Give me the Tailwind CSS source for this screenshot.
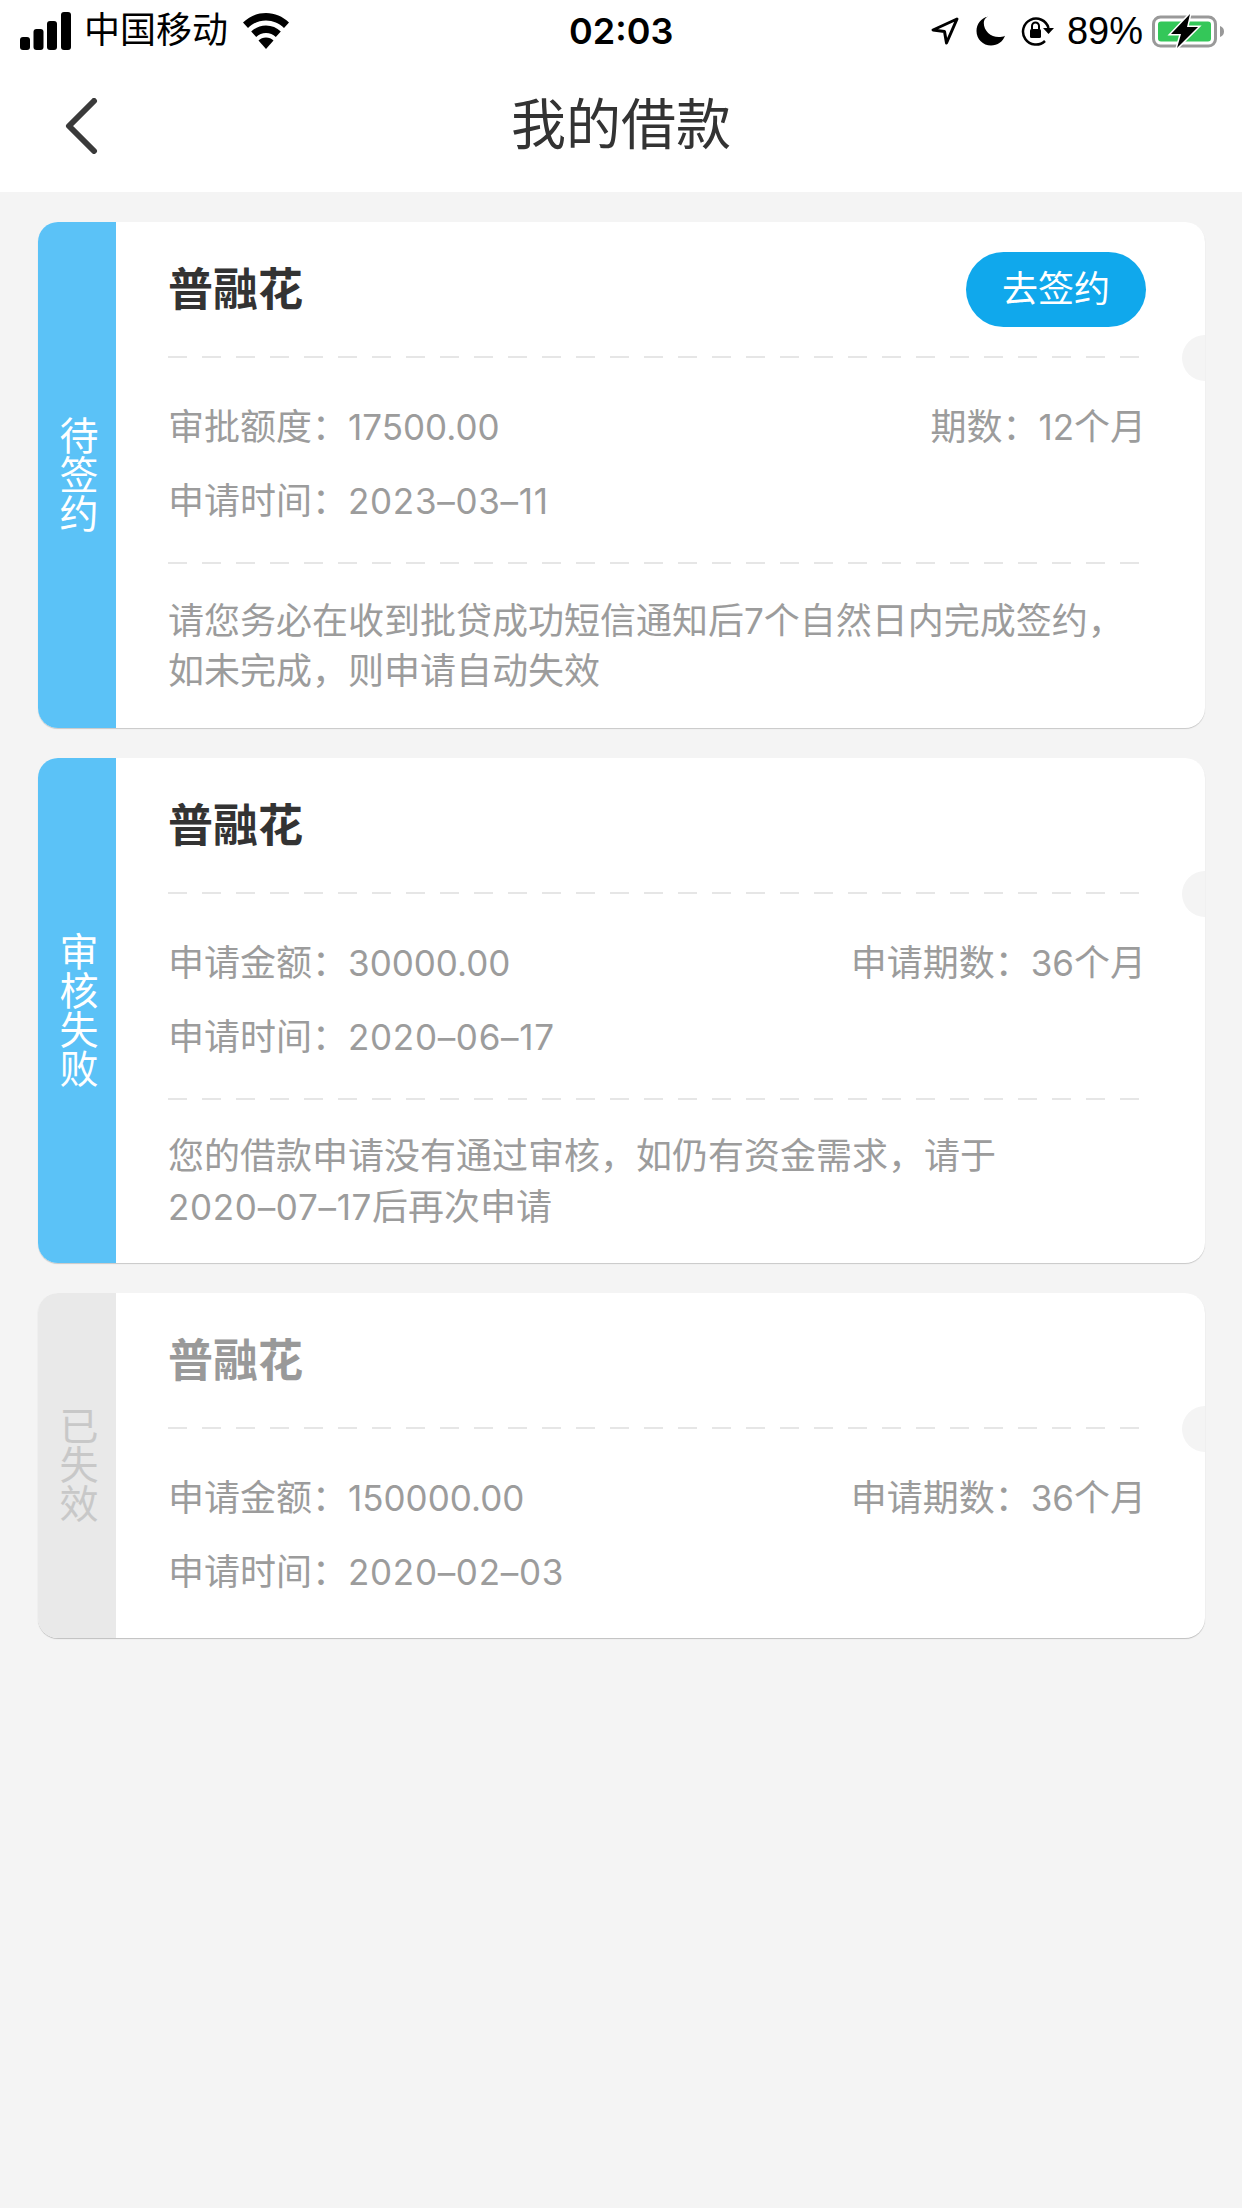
<!DOCTYPE html>
<html lang="zh-CN">
<head>
<meta charset="UTF-8">
<title>我的借款</title>
<script src="https://cdn.jsdelivr.net/npm/@tailwindcss/browser@4"></script>
</head>
<body class="bg-[#f4f4f4] font-['Liberation_Sans','Noto_Sans_CJK_SC',sans-serif]">
<div class="w-[1242px] h-[2208px] overflow-hidden flex flex-col">

  <!-- Status bar -->
  <div class="bg-white h-[62px] flex items-center justify-between relative text-[36px] text-black pl-[20px] pr-[16px]">
    <div class="flex items-center">
      <svg width="51" height="38" viewBox="0 0 51 38" fill="#000"><rect x="0" y="25" width="10" height="13" rx="3"/><rect x="13.500" y="17" width="10" height="21" rx="3"/><rect x="27" y="9" width="10" height="29" rx="3"/><rect x="41" y="0" width="10" height="38" rx="3"/></svg>
      <span class="ml-[13px]">中国移动</span>
      <svg class="ml-[15px]" width="46" height="36" viewBox="0 0 46 36" fill="#000"><path d="M23 0C14 0 6.500 3.500 0 9.500l5 5.500C10 10.300 16 7.500 23 7.500s13 2.800 18 7.500l5-5.500C39.500 3.500 32 0 23 0z"/><path d="M23 12.500c-5.800 0-10.800 2.300-14.800 6l5 5.400c2.700-2.500 6-4 9.800-4s7.100 1.500 9.800 4l5-5.400c-4-3.700-9-6-14.800-6z"/><path d="M23 24.500c-3 0-5.500 1.100-7.500 3L23 36l7.500-8.500c-2-1.900-4.500-3-7.500-3z"/></svg>
    </div>
    <span class="absolute left-[569px] top-[10px] font-['Inter'] font-semibold text-[36px] leading-[42px]">02:03</span>
    <div class="flex items-center">
      <svg width="28" height="28" viewBox="0 0 28 28" fill="none" stroke="#000" stroke-width="3" stroke-linejoin="round"><path d="M26 2 2 13l11.500 1.500L15.500 26z"/></svg>
      <svg class="ml-[17px]" width="30" height="30" viewBox="0 0 30 30" fill="#000"><path d="M12 0.500C5 2 0.500 8 0.500 15c0 8.200 6.500 14.500 14.500 14.500 6.500 0 12-4 14-9.800-2 1-4.200 1.400-6.200 1.400-8.300 0-15-6.200-15-14 0-2.500 1-4.800 3.700-6.600z"/></svg>
      <svg class="ml-[15px]" width="33" height="30" viewBox="0 0 33 30" fill="none"><path d="M27.500 12A13 13 0 1 0 24 25" stroke="#000" stroke-width="2.500"/><path d="M33 12 27.500 18 22 12z" fill="#000"/><rect x="9" y="13" width="11" height="9" rx="1.500" fill="#000"/><path d="M11 13v-3a3.500 3.500 0 0 1 7 0v3" stroke="#000" stroke-width="2"/></svg>
      <span class="ml-[13px] text-[38px]">89%</span>
      <svg class="ml-[9px]" width="74" height="36" viewBox="0 0 74 36" fill="none"><rect x="1.500" y="4" width="62" height="29" rx="7" stroke="#999" stroke-width="3"/><path d="M68 13c3 1 4 3 4 5.500s-1 4.500-4 5.500z" fill="#999"/><rect x="6" y="8.500" width="53" height="20" rx="3" fill="#34c759"/><path d="M38 1 19 21h10l-4 14 21-21H35z" fill="#000" stroke="#fff" stroke-width="3" paint-order="stroke"/></svg>
    </div>
  </div>

  <!-- Nav bar -->
  <div class="bg-white h-[130px] relative flex items-center justify-center pb-[4px] text-[#333] text-[55px]">
    <svg class="absolute left-[64px] top-[36px]" width="34" height="56" viewBox="0 0 34 56" fill="none" stroke="#3a3a3a" stroke-width="6" stroke-linecap="round" stroke-linejoin="round"><path d="M30 3 5 28l25 25"/></svg>
    <span>我的借款</span>
  </div>

  <div class="flex flex-col gap-[30px] pt-[30px] pl-[38px] pr-[37px]">

    <!-- Card 1 -->
    <div class="relative flex bg-white rounded-[20px] overflow-hidden h-[506px] shadow-[0_1px_1px_rgba(0,0,0,0.18)]">
      <div class="w-[78px] shrink-0 bg-[#5bc2f7] flex items-center justify-center pl-[4px] text-white text-[39px] leading-[39px] text-center">待<br>签<br>约</div>
      <div class="flex-1 pl-[52px] pr-[59px]">
        <div class="h-[134px] flex items-center justify-between">
          <span class="text-[45px] font-bold text-[#333] pt-[4px]">普融花</span>
          <span class="w-[180px] h-[75px] rounded-full bg-[#10a8ec] text-white text-[36px] flex items-center justify-center pt-[2px]">去签约</span>
        </div>
        <div class="h-[2px] bg-[repeating-linear-gradient(90deg,#e6e6e6_0,#e6e6e6_19px,transparent_19px,transparent_34px)]"></div>
        <div class="pt-[44px] pb-[37px] flex flex-col gap-[24px] text-[36px] text-[#9c9c9c]">
          <div class="flex justify-between h-[50px] leading-[50px]"><span>审批额度：<span class="font-['Inter'] text-[35px]">17500.00</span></span><span>期数：<span class="font-['Inter'] text-[35px]">12</span>个月</span></div>
          <div class="h-[49px] leading-[50px]">申请时间：<span class="font-['Inter'] text-[35px] tracking-[0.7px]">2023–03–11</span></div>
        </div>
        <div class="h-[2px] bg-[repeating-linear-gradient(90deg,#e6e6e6_0,#e6e6e6_19px,transparent_19px,transparent_34px)]"></div>
        <p class="pt-[32px] text-[36px] leading-[50px] text-[#9c9c9c]">请您务必在收到批贷成功短信通知后<span class="font-['Inter'] text-[35px]">7</span>个自然日内完成签约，<br>如未完成，则申请自动失效</p>
      </div>
      <div class="absolute right-[-23px] top-[113px] w-[46px] h-[46px] rounded-full bg-[#f4f4f4]"></div>
    </div>

    <!-- Card 2 -->
    <div class="relative flex bg-white rounded-[20px] overflow-hidden h-[505px] shadow-[0_1px_1px_rgba(0,0,0,0.18)]">
      <div class="w-[78px] shrink-0 bg-[#5bc2f7] flex items-center justify-center pl-[4px] text-white text-[39px] leading-[39px] text-center">审<br>核<br>失<br>败</div>
      <div class="flex-1 pl-[52px] pr-[59px]">
        <div class="h-[134px] flex items-center justify-between">
          <span class="text-[45px] font-bold text-[#333] pt-[4px]">普融花</span>
        </div>
        <div class="h-[2px] bg-[repeating-linear-gradient(90deg,#e6e6e6_0,#e6e6e6_19px,transparent_19px,transparent_34px)]"></div>
        <div class="pt-[44px] pb-[37px] flex flex-col gap-[24px] text-[36px] text-[#9c9c9c]">
          <div class="flex justify-between h-[50px] leading-[50px]"><span>申请金额：<span class="font-['Inter'] text-[35px]">30000.00</span></span><span>申请期数：<span class="font-['Inter'] text-[35px]">36</span>个月</span></div>
          <div class="h-[49px] leading-[50px]">申请时间：<span class="font-['Inter'] text-[35px] tracking-[0.7px]">2020–06–17</span></div>
        </div>
        <div class="h-[2px] bg-[repeating-linear-gradient(90deg,#e6e6e6_0,#e6e6e6_19px,transparent_19px,transparent_34px)]"></div>
        <p class="pt-[32px] text-[36px] leading-[50px] text-[#9c9c9c]">您的借款申请没有通过审核，如仍有资金需求，请于<br><span class="font-['Inter'] text-[35px] tracking-[0.7px]">2020–07–17</span>后再次申请</p>
      </div>
      <div class="absolute right-[-23px] top-[113px] w-[46px] h-[46px] rounded-full bg-[#f4f4f4]"></div>
    </div>

    <!-- Card 3 -->
    <div class="relative flex bg-white rounded-[20px] overflow-hidden h-[345px] shadow-[0_1px_1px_rgba(0,0,0,0.22)]">
      <div class="w-[78px] shrink-0 bg-[#e9e9e9] flex items-center justify-center pl-[4px] text-[#c8c8c8] text-[39px] leading-[39px] text-center">已<br>失<br>效</div>
      <div class="flex-1 pl-[52px] pr-[59px]">
        <div class="h-[134px] flex items-center justify-between">
          <span class="text-[45px] font-bold text-[#999] pt-[4px]">普融花</span>
        </div>
        <div class="h-[2px] bg-[repeating-linear-gradient(90deg,#e6e6e6_0,#e6e6e6_19px,transparent_19px,transparent_34px)]"></div>
        <div class="pt-[44px] flex flex-col gap-[24px] text-[36px] text-[#9c9c9c]">
          <div class="flex justify-between h-[50px] leading-[50px]"><span>申请金额：<span class="font-['Inter'] text-[35px]">150000.00</span></span><span>申请期数：<span class="font-['Inter'] text-[35px]">36</span>个月</span></div>
          <div class="h-[49px] leading-[50px]">申请时间：<span class="font-['Inter'] text-[35px] tracking-[0.7px]">2020–02–03</span></div>
        </div>
      </div>
      <div class="absolute right-[-23px] top-[113px] w-[46px] h-[46px] rounded-full bg-[#f4f4f4]"></div>
    </div>

  </div>
</div>
</body>
</html>
